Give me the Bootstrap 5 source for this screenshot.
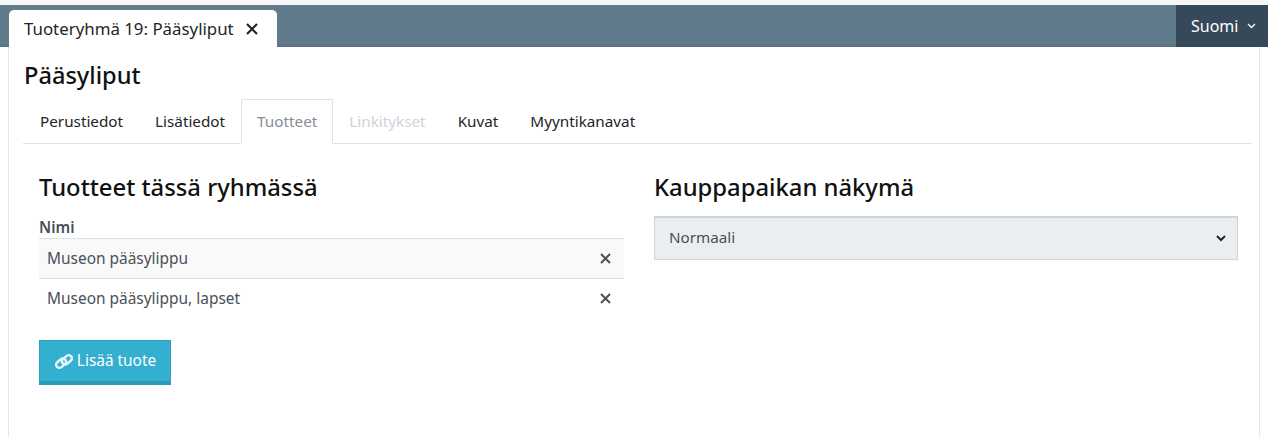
<!DOCTYPE html>
<html lang="fi">
<head>
<meta charset="utf-8">
<title>Pääsyliput</title>
<link rel="stylesheet" href="https://cdn.jsdelivr.net/npm/bootstrap@5.3.0/dist/css/bootstrap.min.css">
<style>
html,body{height:437px;overflow:hidden;background:#fff;}
body{font-family:"Noto Sans","Open Sans",sans-serif;font-size:15.45px;color:#495057;padding-top:5px;}
.strip{position:absolute;top:0;left:0;right:0;height:5px;background:#f4f6f7;}
.topbar{height:42px;background:#607b8c;border-bottom:3px solid #5d7483;}
.tabchip{margin:5px 0 -3px 9px;width:268px;height:37px;background:#fff;border-radius:5px 5px 0 0;padding-left:15px;color:#212529;font-size:16.85px;}
.tabx{margin-left:12px;}
.langbtn{width:92px;height:42px;margin-bottom:-3px;background:#35495a;color:#fff;padding:0 12px 0 15px;font-size:16px;}
.sheet{margin:0 8px;height:390px;border-left:1px solid #e3e6e8;border-right:1px solid #e3e6e8;padding:0 7px 0 14px;}
.pagetitle{font-size:23.6px;font-weight:500;color:#111;margin:0;padding:11px 0 0 1px;height:52px;line-height:34px;}
.sheet .tabrow{border-bottom:1px solid #dee2e6;height:45px;padding-left:1px;}
.sheet .tabrow .nav-link{padding:0 15px;height:45px;line-height:43px;color:#212529;font-size:15.27px;border:1px solid transparent;border-radius:0;margin:0;}
.sheet .tabrow .nav-link.active{color:#868e96;border-color:#dee2e6 #dee2e6 #fff;background:#fff;}
.sheet .tabrow .nav-link.disabled{color:#ced4da;}
.panes{padding:26px 0 0 16px;}
.lefthalf{width:585px;}
.righthalf{width:584px;margin-left:30px;}
.sectionhead{font-size:23.8px;font-weight:500;color:#111;margin:0;line-height:34px;}
.colhead{font-weight:600;font-size:15.3px;color:#495057;margin-top:12px;line-height:22px;border-bottom:1px solid #dee2e6;height:23px;}
.prodrow{height:40px;border-bottom:1px solid #dee2e6;padding:0 13px 0 8px;color:#495057;}
.prodrow.alt{background:#f9f9f9;}
.prodrow.last{border-bottom:0;padding-bottom:1px;}
.addbtn{margin-top:21px;width:132px;height:45px;background:#33b0cf;border:1px solid #2f9fbb;border-bottom:4px solid #2d9ab6;color:#fff;font-size:15.4px;border-radius:0;padding:0;gap:3px;}
.addbtn:hover{background:#33b0cf;color:#fff;border-color:#2f9fbb;}
.kind{margin-top:12px;height:44px;background-color:#ebeef1;border:2px solid #ced4da;border-width:2px 1px 1px 1px;border-radius:0;color:#495057;font-size:15.2px;padding:0 14px 2px;background-image:url("data:image/svg+xml,%3csvg xmlns='http://www.w3.org/2000/svg' viewBox='0 0 10 7'%3e%3cpath fill='none' stroke='%23212529' stroke-width='2' d='M1 1l4 4 4-4'/%3e%3c/svg%3e");background-position:right 11px center;background-size:10px 7px;}
</style>
</head>
<body>
<div class="strip"></div>
<div class="topbar d-flex justify-content-between">
  <div class="tabchip d-flex align-items-center">
    <span>Tuoteryhmä 19: Pääsyliput</span>
    <svg class="tabx" width="12" height="12" viewBox="0 0 12 12"><path d="M1 1L11 11M11 1L1 11" stroke="#212529" stroke-width="2.2"/></svg>
  </div>
  <div class="langbtn d-flex align-items-center justify-content-between">
    <span>Suomi</span>
    <svg width="9" height="6" viewBox="0 0 9 6"><path d="M1 1L4.5 4.5L8 1" stroke="#fff" stroke-width="1.3" fill="none"/></svg>
  </div>
</div>
<div class="sheet">
  <h1 class="pagetitle">Pääsyliput</h1>
  <ul class="nav tabrow">
    <li class="nav-item"><a class="nav-link" href="#">Perustiedot</a></li>
    <li class="nav-item"><a class="nav-link" href="#">Lisätiedot</a></li>
    <li class="nav-item"><a class="nav-link active" href="#">Tuotteet</a></li>
    <li class="nav-item"><a class="nav-link disabled" href="#">Linkitykset</a></li>
    <li class="nav-item"><a class="nav-link" href="#">Kuvat</a></li>
    <li class="nav-item"><a class="nav-link" href="#">Myyntikanavat</a></li>
  </ul>
  <div class="panes d-flex">
    <div class="lefthalf">
      <h2 class="sectionhead">Tuotteet tässä ryhmässä</h2>
      <div class="colhead">Nimi</div>
      <div class="prodrow alt d-flex align-items-center justify-content-between">
        <span>Museon pääsylippu</span>
        <svg width="11" height="11" viewBox="0 0 11 11"><path d="M1 1L10 10M10 1L1 10" stroke="#495057" stroke-width="2"/></svg>
      </div>
      <div class="prodrow last d-flex align-items-center justify-content-between">
        <span>Museon pääsylippu, lapset</span>
        <svg width="11" height="11" viewBox="0 0 11 11"><path d="M1 1L10 10M10 1L1 10" stroke="#495057" stroke-width="2"/></svg>
      </div>
      <button class="btn addbtn d-flex align-items-center justify-content-center" type="button">
        <svg width="20" height="17" viewBox="0 0 20 17"><g fill="none" stroke="#e6f7fb" stroke-width="2.4"><rect x="1.6" y="7" width="11" height="6.4" rx="3.2" transform="rotate(-40 7.1 10.2)"/><rect x="7.4" y="3.6" width="11" height="6.4" rx="3.2" transform="rotate(-40 12.9 6.8)"/></g></svg>
        <span>Lisää tuote</span>
      </button>
    </div>
    <div class="righthalf">
      <h2 class="sectionhead">Kauppapaikan näkymä</h2>
      <select class="form-select kind"><option>Normaali</option></select>
    </div>
  </div>
</div>
<script src="https://cdn.jsdelivr.net/npm/bootstrap@5.3.0/dist/js/bootstrap.bundle.min.js"></script>
</body>
</html>
